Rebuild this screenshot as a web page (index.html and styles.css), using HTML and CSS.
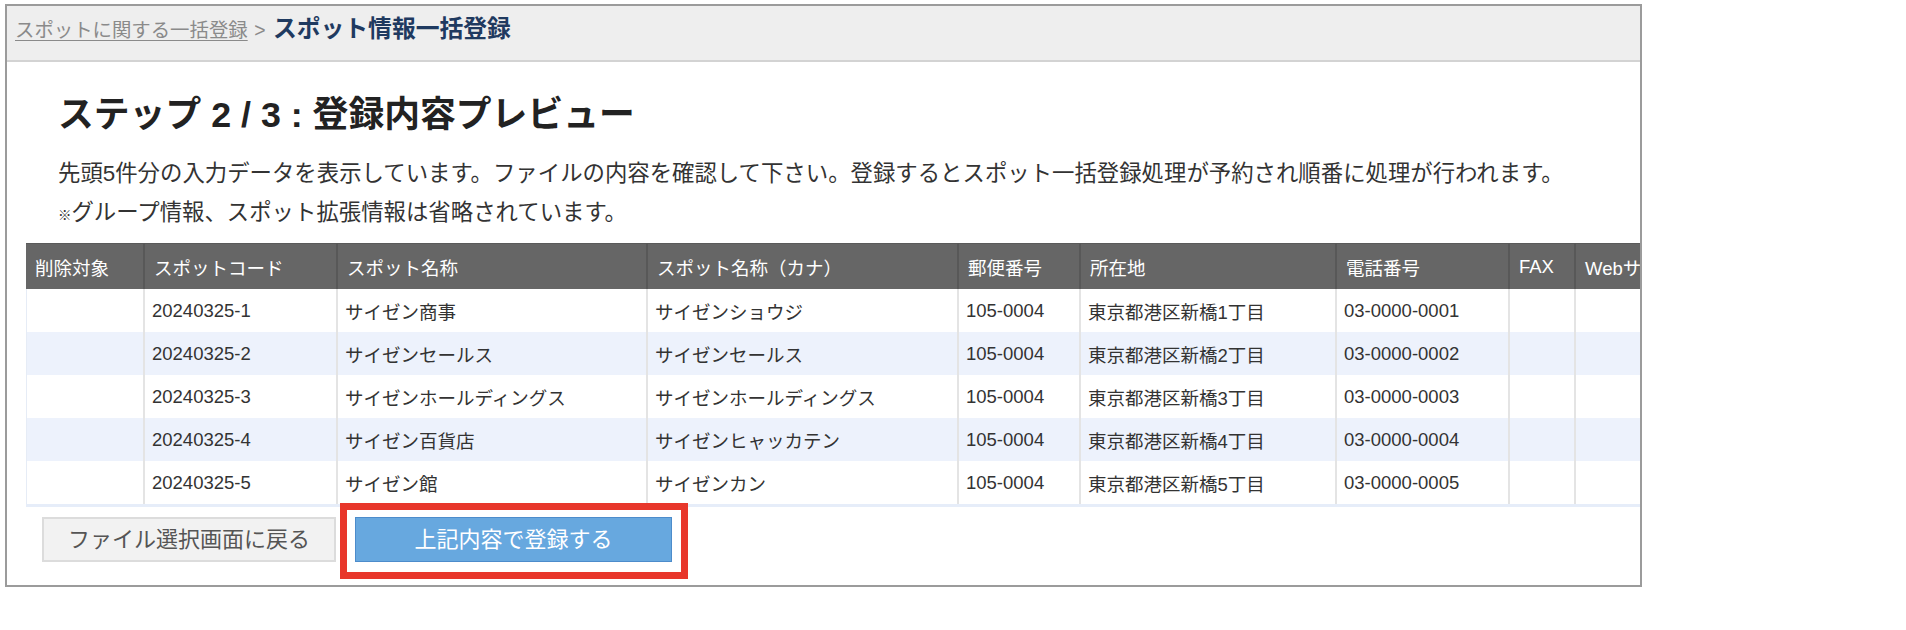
FILE: index.html
```html
<!DOCTYPE html>
<html lang="ja">
<head>
<meta charset="utf-8">
<title>スポット情報一括登録</title>
<link rel="stylesheet" href="styles.css">
</head>
<body>
<div class="frame">
  <div class="crumbs">
    <a class="crumb-link" href="#">スポットに関する一括登録</a>
    <span class="crumb-sep">&gt;</span>
    <span class="crumb-current">スポット情報一括登録</span>
  </div>
  <div class="content">
    <h1 class="title">ステップ 2 / 3 : 登録内容プレビュー</h1>
    <p class="lead">先頭5件分の入力データを表示しています。ファイルの内容を確認して下さい。登録するとスポット一括登録処理が予約され順番に処理が行われます。<br><span class="note-mark">※</span>グループ情報、スポット拡張情報は省略されています。</p>
    <div class="table-wrap">
      <table class="preview">
        <colgroup>
          <col class="c-del"><col class="c-code"><col class="c-name"><col class="c-kana"><col class="c-zip"><col class="c-addr"><col class="c-tel"><col class="c-fax"><col class="c-web">
        </colgroup>
        <thead>
          <tr><th>削除対象</th><th>スポットコード</th><th>スポット名称</th><th>スポット名称（カナ）</th><th>郵便番号</th><th>所在地</th><th>電話番号</th><th>FAX</th><th>Webサイト</th></tr>
        </thead>
        <tbody>
          <tr><td></td><td>20240325-1</td><td>サイゼン商事</td><td>サイゼンショウジ</td><td>105-0004</td><td>東京都港区新橋1丁目</td><td>03-0000-0001</td><td></td><td></td></tr>
          <tr><td></td><td>20240325-2</td><td>サイゼンセールス</td><td>サイゼンセールス</td><td>105-0004</td><td>東京都港区新橋2丁目</td><td>03-0000-0002</td><td></td><td></td></tr>
          <tr><td></td><td>20240325-3</td><td>サイゼンホールディングス</td><td>サイゼンホールディングス</td><td>105-0004</td><td>東京都港区新橋3丁目</td><td>03-0000-0003</td><td></td><td></td></tr>
          <tr><td></td><td>20240325-4</td><td>サイゼン百貨店</td><td>サイゼンヒャッカテン</td><td>105-0004</td><td>東京都港区新橋4丁目</td><td>03-0000-0004</td><td></td><td></td></tr>
          <tr><td></td><td>20240325-5</td><td>サイゼン館</td><td>サイゼンカン</td><td>105-0004</td><td>東京都港区新橋5丁目</td><td>03-0000-0005</td><td></td><td></td></tr>
        </tbody>
      </table>
    </div>
    <div class="actions">
      <button class="btn btn-back" type="button">ファイル選択画面に戻る</button>
      <div class="highlight">
        <button class="btn btn-primary" type="button">上記内容で登録する</button>
      </div>
    </div>
  </div>
</div>
</body>
</html>
```

FILE: styles.css
```css
* { box-sizing: border-box; }

html, body {
  margin: 0;
  padding: 0;
  background: #ffffff;
}

body {
  font-family: "Liberation Sans", "Noto Sans CJK JP", sans-serif;
  color: #333333;
}

.frame {
  margin: 4px 0 0 5px;
  width: 1637px;
  border: 2px solid #9b9b9b;
  background: #ffffff;
}

.crumbs {
  height: 56px;
  padding: 8px 0 0 8px;
  background: #eeeeee;
  border-bottom: 2px solid #d3d3d3;
  line-height: 30px;
  white-space: nowrap;
  overflow: hidden;
}

.crumb-link {
  font-size: 19.4px;
  color: #8a8a8a;
  text-decoration: underline;
  text-underline-offset: 3px;
}

.crumb-sep {
  font-size: 19.4px;
  color: #8a8a8a;
  margin: 0 3px 0 2px;
}

.crumb-current {
  font-size: 23.8px;
  font-weight: bold;
  color: #1f3a60;
}

.content {
  padding: 0 0 0 19px;
}

.title {
  margin: 28px 0 0 32px;
  height: 50px;
  font-size: 35.8px;
  line-height: 50px;
  font-weight: bold;
  color: #222222;
  white-space: nowrap;
}

.lead {
  margin: 14px 0 0 32px;
  height: 78px;
  font-size: 22.4px;
  line-height: 39px;
  color: #333333;
  white-space: nowrap;
}

.note-mark {
  font-size: 0.6em;
  line-height: 1;
}

.table-wrap {
  margin-top: 11px;
  overflow: hidden;
}

.preview {
  table-layout: fixed;
  width: 1770px;
  border-collapse: separate;
  border-spacing: 0;
  font-size: 18.5px;
  color: #333333;
  border-bottom: 3px solid #e6edf9;
}

.c-del { width: 119px; }
.c-code { width: 193px; }
.c-name { width: 310px; }
.c-kana { width: 311px; }
.c-zip { width: 122px; }
.c-addr { width: 256px; }
.c-tel { width: 173px; }
.c-fax { width: 66px; }
.c-web { width: 220px; }

.preview th {
  height: 46px;
  padding: 0 8px 0 9px;
  background: #666666;
  color: #ffffff;
  font-weight: normal;
  text-align: left;
  white-space: nowrap;
  overflow: hidden;
  border-right: 2px solid #585858;
  border-top: 1px solid #5a5a5a;
}

.preview td {
  height: 43px;
  padding: 0 8px 0 7px;
  white-space: nowrap;
  overflow: hidden;
  border-right: 2px solid #e4e4e4;
}

.preview td:first-child {
  border-left: 1px solid #e6ecf6;
}

.preview tbody tr:nth-child(even) td {
  background: #edf2fc;
}

.actions {
  display: flex;
  gap: 19px;
  margin: 10px 0 23px 16px;
}

.btn {
  height: 45px;
  font-family: "Liberation Sans", "Noto Sans CJK JP", sans-serif;
  font-size: 22px;
  line-height: 1;
  padding: 0;
  cursor: pointer;
}

.btn-back {
  width: 294px;
  background: #f2f2f2;
  border: 2px solid #dcdcdc;
  color: #555555;
}

.btn-primary {
  width: 317px;
  background: #67a8df;
  border: 1px solid #4d8ccb;
  color: #ffffff;
}

.highlight {
  position: relative;
  display: flex;
}

.highlight::after {
  content: "";
  position: absolute;
  left: -15px;
  top: -14px;
  right: -16px;
  bottom: -17px;
  border: 7px solid #e8372b;
  pointer-events: none;
}
```
